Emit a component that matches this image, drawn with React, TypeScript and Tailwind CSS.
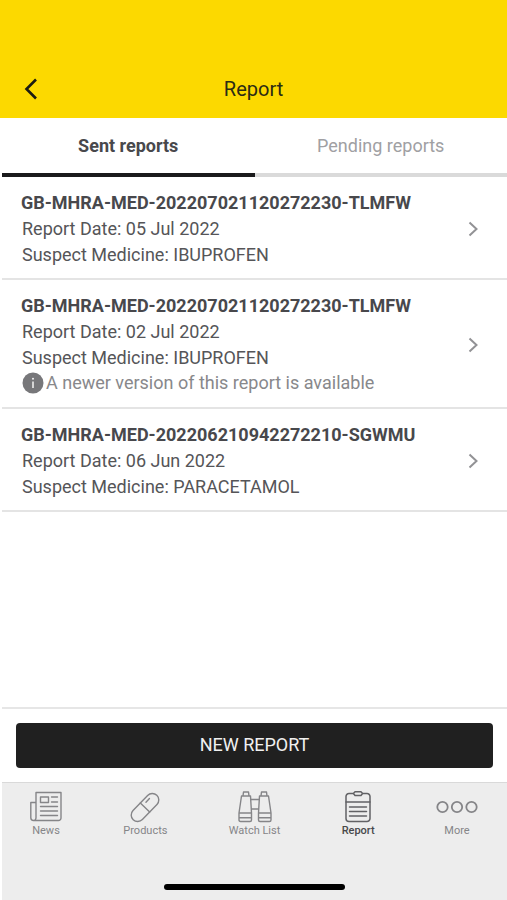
import { useState } from "react";
import type { ReactNode } from "react";

type Report = {
  id: string;
  date: string;
  medicine: string;
  superseded?: boolean;
};

const reports: Report[] = [
  { id: "GB-MHRA-MED-202207021120272230-TLMFW", date: "05 Jul 2022", medicine: "IBUPROFEN" },
  { id: "GB-MHRA-MED-202207021120272230-TLMFW", date: "02 Jul 2022", medicine: "IBUPROFEN", superseded: true },
  { id: "GB-MHRA-MED-202206210942272210-SGWMU", date: "06 Jun 2022", medicine: "PARACETAMOL" },
];

function NewsIcon() {
  return (
    <svg width="32" height="32" viewBox="0 0 32 32" fill="none" stroke="currentColor" strokeWidth="1.4" strokeLinejoin="round" strokeLinecap="round">
      <path d="M6 26.5V1.500h25v25.500a2.500 2.500 0 0 1-2.500 2.500H3.500A2.700 2.700 0 0 1 .8 26.800V11.500H6v15.300A2.600 2.600 0 0 1 3.500 29.500" />
      <path d="M10.500 6h8v5.500h-8zM21.500 6h6M21.500 11h6M10.500 15.500h17M10.500 20h17M10.500 24.500h17" />
    </svg>
  );
}

function PillIcon() {
  return (
    <svg width="32" height="32" viewBox="0 0 32 32" fill="none" stroke="currentColor" strokeWidth="1.4" strokeLinecap="round">
      <g transform="rotate(-46 16 16.500)">
        <rect x="-1" y="10" width="34" height="13" rx="6.500" />
        <path d="M16 10v13M20.500 13.500h5" />
      </g>
    </svg>
  );
}

function BinocularsIcon() {
  return (
    <svg width="34" height="32" viewBox="0 0 34 32" fill="none" stroke="currentColor" strokeWidth="1.4" strokeLinejoin="round">
      <path d="M3.500 5h9L13.500 22v7q0 1.500-1.500 1.500H2.500q-1.500 0-1.500-1.500v-7zM5 5l.5-4h5l.5 4M1 22h12.500M1 26.800h12.500" />
      <path d="M30.500 5h-9L20.500 22v7q0 1.500 1.500 1.500h9.500q1.500 0 1.500-1.500v-7zM29 5l-.5-4h-5l-.5 4M33 22H20.500M33 26.800H20.500" />
      <path d="M12.800 8.500h8.400M13.300 18h7.400" />
    </svg>
  );
}

function ClipboardIcon() {
  return (
    <svg width="26" height="32" viewBox="0 0 26 32" fill="none" stroke="#626265" strokeWidth="1.500" strokeLinejoin="round" strokeLinecap="round">
      <path d="M8.500 2.500H4a3 3 0 0 0-3 3v22a3 3 0 0 0 3 3h18a3 3 0 0 0 3-3v-22a3 3 0 0 0-3-3h-4.500" />
      <path d="M10 .8h6l1.500 1.700L16 4.500h-6L8.500 2.500zM1 11h24M4.500 16h17M4.500 20.500h17M4.500 25h17" />
    </svg>
  );
}

function MoreIcon() {
  return (
    <svg width="42" height="32" viewBox="0 0 42 32" fill="none" stroke="currentColor" strokeWidth="1.800">
      <circle cx="6.500" cy="16" r="5.200" />
      <circle cx="21" cy="16" r="5.200" />
      <circle cx="35.500" cy="16" r="5.200" />
    </svg>
  );
}

function InfoIcon() {
  return (
    <svg width="22" height="22" viewBox="0 0 22 22" className="shrink-0" aria-hidden="true">
      <circle cx="11" cy="11" r="10.500" fill="#77777a" />
      <circle cx="11" cy="6.800" r="1" fill="#f4f4f4" />
      <path d="M11 9.500v6.500" stroke="#f4f4f4" strokeWidth="1.500" />
    </svg>
  );
}

function ReportRow({ report }: { report: Report }) {
  return (
    <li className="border-b-2 border-[#e4e4e4]">
      <a
        href="#report"
        className="flex items-center justify-between pt-[13px] pr-7 pb-[11px] pl-[19px] text-lg leading-[26px] text-[#555558]"
      >
        <div>
          <h2 className="font-bold text-[#48484c]">{report.id}</h2>
          <p className="pl-px">Report Date: {report.date}</p>
          <p className="pl-px leading-[25px]">Suspect Medicine: {report.medicine}</p>
          {report.superseded && (
            <p className="flex items-center gap-0.5 pl-px text-[#88888b]">
              <InfoIcon />
              A newer version of this report is available
            </p>
          )}
        </div>
        <svg width="12" height="16" viewBox="0 0 12 16" fill="none" stroke="#929295" strokeWidth="2" aria-hidden="true">
          <path d="M2.500 1.500 9.500 8l-7 6.500" />
        </svg>
      </a>
    </li>
  );
}

const navItems: { label: string; icon: ReactNode; active?: boolean }[] = [
  { label: "News", icon: <NewsIcon /> },
  { label: "Products", icon: <PillIcon /> },
  { label: "Watch List", icon: <BinocularsIcon /> },
  { label: "Report", icon: <ClipboardIcon />, active: true },
  { label: "More", icon: <MoreIcon /> },
];

const tabs = ["Sent reports", "Pending reports"];

export default function App() {
  const [tab, setTab] = useState(0);
  return (
    <div className="flex min-h-screen flex-col bg-white font-[Roboto,sans-serif]">
      <header className="grid grid-cols-[1fr_auto_1fr] items-center bg-[#fcd900] px-5 pt-[68px] pb-2 text-[#2b2b14]">
        <button type="button" aria-label="Back" className="flex h-[42px] w-[22px] items-center justify-center">
          <svg width="16" height="22" viewBox="0 0 16 22" fill="none" stroke="#1b1b12" strokeWidth="2.600">
            <path d="M13 1.500 3.500 11 13 20.500" />
          </svg>
        </button>
        <h1 className="text-xl leading-6">Report</h1>
      </header>

      <main className="flex flex-1 flex-col pl-0.5">
        <div role="tablist" className="grid grid-cols-2">
          {tabs.map((label, i) => (
            <button
              key={label}
              type="button"
              role="tab"
              aria-selected={tab === i}
              onClick={() => setTab(i)}
              className={
                tab === i
                  ? "h-[59px] border-b-4 border-[#1a1a1c] text-lg font-bold text-[#48484c]"
                  : "h-[59px] border-b-4 border-[#dadada] text-lg text-[#a0a0a3]"
              }
            >
              {label}
            </button>
          ))}
        </div>
        <ul className="flex-1">{tab === 0 && reports.map((r, i) => <ReportRow key={i} report={r} />)}</ul>
        <div className="border-t-2 border-[#e6e6e6] p-[14px]">
          <button type="button" className="h-[45px] w-full rounded bg-[#202020] pb-0.5 text-lg text-[#f0f0f0]">
            NEW REPORT
          </button>
        </div>
      </main>

      <footer className="ml-0.5 border-t border-[#d9d9d9] bg-[#ededed]">
        <nav className="flex justify-between pt-2 pr-[29px] pl-7">
          {navItems.map((item) => (
            <a
              key={item.label}
              href="#nav"
              className={
                item.active
                  ? "flex flex-col items-center text-[11px] leading-4 font-medium text-[#48484a]"
                  : "flex flex-col items-center text-[11px] leading-4 text-[#858588]"
              }
            >
              {item.icon}
              {item.label}
            </a>
          ))}
        </nav>
        <div className="flex justify-center pt-[45px] pb-[10px]">
          <div className="h-[6px] w-[36%] rounded-full bg-black" />
        </div>
      </footer>
    </div>
  );
}
